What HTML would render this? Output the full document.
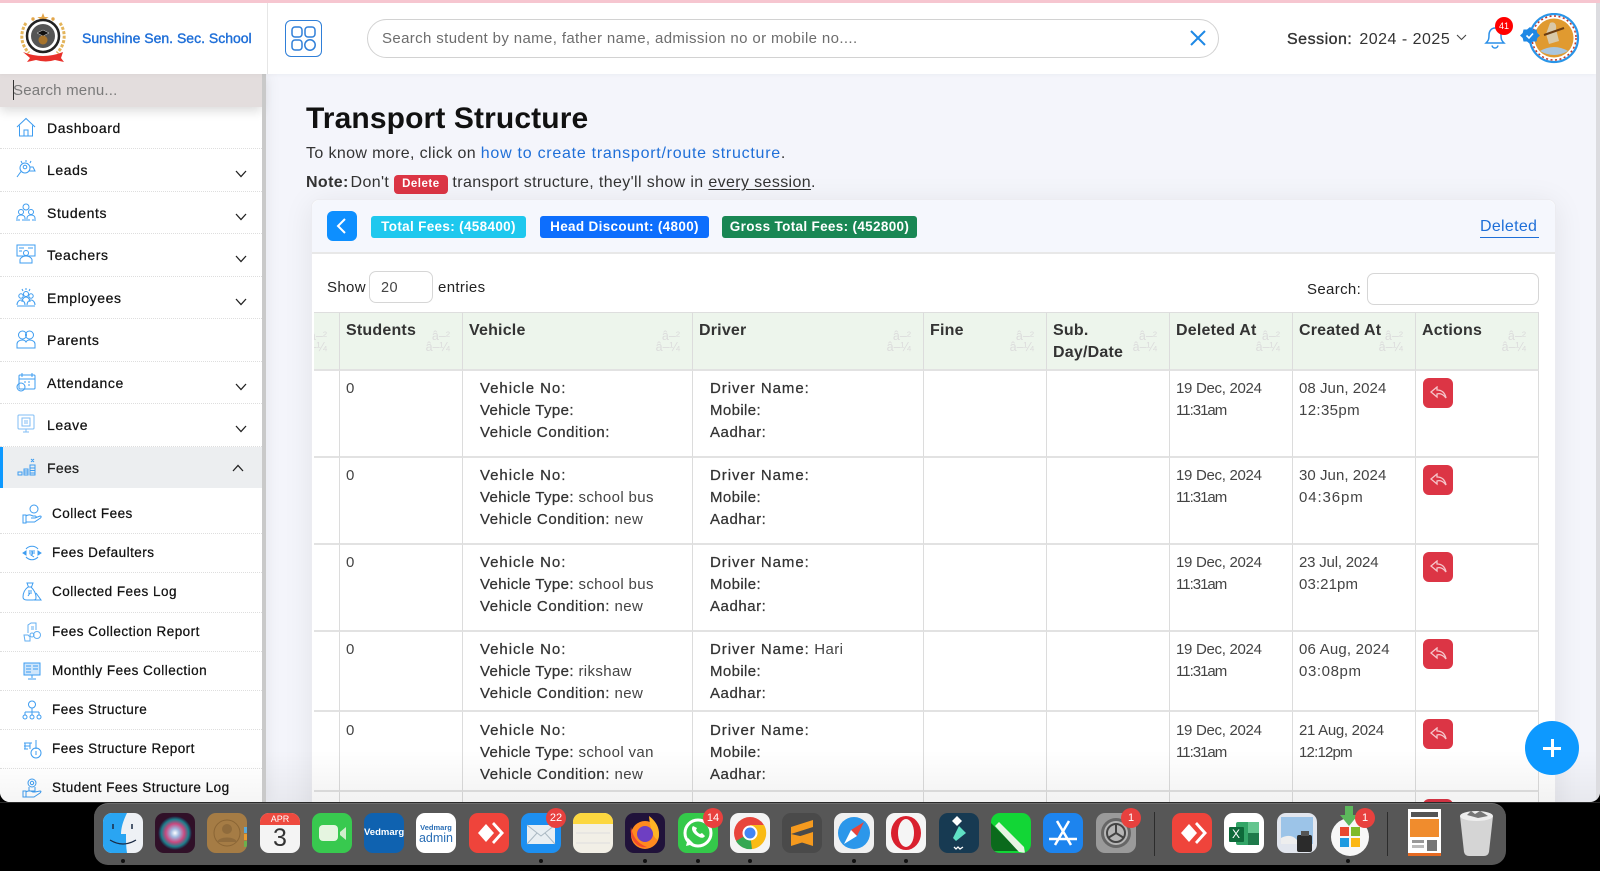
<!DOCTYPE html>
<html lang="en"><head><meta charset="utf-8"><title>Transport Structure</title>
<style>
*{box-sizing:border-box}
html,body{margin:0;padding:0;width:1600px;height:871px;overflow:hidden;background:#000}
body{font-family:"Liberation Sans",sans-serif;color:#333;position:relative}
a{text-decoration:none}
#win{position:absolute;left:0;top:0;width:1600px;height:802px;overflow:hidden;background:#f4f5fb;border-radius:0 0 10px 10px}
#pink{position:absolute;left:0;top:0;width:1600px;height:3px;background:#f6c6d0;z-index:9}
#hdr{position:absolute;left:0;top:3px;width:1596px;height:71px;background:#fff;z-index:5;box-shadow:0 1px 4px rgba(0,0,0,.04)}
#vl{position:absolute;left:267px;top:0;width:1px;height:71px;background:#e6e6e6}
#school{position:absolute;left:82px;top:26px;font-size:14px;line-height:18px;font-weight:400;color:#1f6fd8;letter-spacing:0;-webkit-text-stroke:.4px #1f6fd8;white-space:nowrap}
#grid{position:absolute;left:285px;top:17px;width:37px;height:37px;border:1px solid #2f7fd8;border-radius:6px}
#srch{position:absolute;left:367px;top:16px;width:852px;height:39px;border:1px solid #d2d2d2;border-radius:20px;font-size:15px;line-height:38px;padding-left:14px;color:#6d6d6d;letter-spacing:.37px}
#sess{position:absolute;left:1287px;top:27px;font-size:16px;line-height:20px;color:#333;white-space:nowrap;letter-spacing:.5px}
#sess b{font-weight:400;-webkit-text-stroke:.35px #333;margin-right:2px}
.abs{position:absolute}
#notif{position:absolute;left:1495px;top:14px;width:18px;height:18px;border-radius:50%;background:#f00;color:#fff;font-size:9px;line-height:18px;text-align:center}
#side{position:absolute;left:0;top:74px;width:262px;height:728px;background:#fff;z-index:3;box-shadow:6px 0 14px rgba(0,0,0,.06)}
#sbar{position:absolute;left:262px;top:74px;width:4px;height:728px;background:#c9c9c9;z-index:4}
#ss{height:33px;background:#e3dddd;font-size:15px;line-height:33px;padding-left:13px;color:#7a7a7a;letter-spacing:.2px;box-shadow:0 4px 10px rgba(0,0,0,.14);position:relative;z-index:2}
#ss i{position:absolute;left:13px;top:6px;width:1px;height:20px;background:#333}
.m{position:relative;height:42.45px;border-bottom:1px dotted #dedede;font-size:14px;line-height:42px;padding-left:47px;color:#111;letter-spacing:.6px;-webkit-text-stroke:.25px #111;white-space:nowrap}
.m svg.ic{position:absolute;left:16px;top:10px;width:20px;height:20px;fill:none;stroke:#3d9cf0;stroke-width:1;-webkit-text-stroke:0}
.m svg.ch{position:absolute;left:235px;top:21px;width:12px;height:8px;fill:none;stroke:#222;stroke-width:1.3}
.m.on{background:#eceef0;height:41px;border-bottom:0;border-left:3px solid #0d99ff;padding-left:44px;color:#222;letter-spacing:.3px}
.m.on svg.ic{left:14px}
.m.on svg.ch{left:229px;top:17px}
.s{position:relative;height:39.2px;border-bottom:1px dotted #dedede;font-size:13.5px;line-height:38px;padding-left:52px;color:#111;letter-spacing:.48px;-webkit-text-stroke:.25px #111;white-space:nowrap}
.s svg{position:absolute;left:22px;top:9px;width:20px;height:20px;fill:none;stroke:#3d9cf0;stroke-width:1;-webkit-text-stroke:0}
h1{position:absolute;left:306px;top:100px;margin:0;font-size:30px;line-height:38px;font-weight:700;color:#111;letter-spacing:.12px;white-space:nowrap}
.ln{position:absolute;left:306px;font-size:16px;line-height:22px;color:#333;letter-spacing:.37px;white-space:nowrap}
.ln a{color:#1f6fd8;letter-spacing:.74px}
.ln u{text-underline-offset:2px}
.ln b{margin-right:-3px}
.dl{display:inline-block;background:#dc3545;color:#fff;font-size:11.5px;font-weight:700;line-height:19px;height:19px;padding:0 8px;border-radius:4px;vertical-align:0;letter-spacing:.5px;margin:0}
#card{position:absolute;left:311px;top:199px;width:1245px;height:640px;background:#fff;border:1px solid #ececf1;border-radius:8px 8px 0 0;box-shadow:0 4px 30px rgba(0,0,0,.08)}
#chd{position:absolute;left:0;top:0;width:1243px;height:54px;background:#f5f7fd;border-bottom:2px solid #e8e8e8;border-radius:8px 8px 0 0}
#back{position:absolute;left:15px;top:11px;width:30px;height:30px;background:#0d8fff;border-radius:6px}
.bd{position:absolute;top:16px;height:22px;border-radius:3px;color:#fff;font-size:13.5px;font-weight:700;line-height:22px;text-align:center;white-space:nowrap;letter-spacing:.33px}
#del{position:absolute;left:1168px;top:16px;width:59px;font-size:16px;line-height:21px;color:#1f6fd8;border-bottom:1px solid #1f6fd8;letter-spacing:.3px;white-space:nowrap}
.tx{position:absolute;font-size:15px;line-height:20px;color:#222;white-space:nowrap;letter-spacing:.35px}
.inp{position:absolute;background:#fff;border:1px solid #d6d6d6;border-radius:7px}
#tw{position:absolute;left:314px;top:312px;width:1225px;height:490px;overflow:hidden}
table{border-collapse:separate;border-spacing:0;table-layout:fixed;width:1322px;margin-left:-97px}
th{position:relative;background:#edf5ec;height:59px;vertical-align:top;text-align:left;padding:7px 6px 0;font-size:16px;line-height:21.5px;font-weight:700;color:#333;border-top:1px solid #dedede;border-right:1.6px solid #dcdcdc;border-bottom:2px solid #e2e2e2;letter-spacing:.2px}
th span{position:absolute;right:12px;top:18px;font-size:12.5px;line-height:11px;font-weight:400;color:#dcdcdc;text-align:right;letter-spacing:0}
td{vertical-align:top;padding:7px 6px 0;font-size:15px;line-height:22px;color:#444;border-right:1.6px solid #dcdcdc;border-bottom:2px solid #e2e2e2;letter-spacing:.37px;white-space:nowrap}
td:last-child{padding-left:7px}
td.d{padding-left:17px}
td em{font-style:normal;color:#333;letter-spacing:.55px;-webkit-text-stroke:.25px #333}
td.d em:nth-of-type(1){letter-spacing:.95px}
td.d em:nth-of-type(2){letter-spacing:.38px}
td.dt{letter-spacing:-.3px}
td.dt i{font-style:normal;letter-spacing:-1px}
td.ct{letter-spacing:.05px}
td.ct i{font-style:normal;letter-spacing:.37px}
.r{display:block;width:30px;height:30px;background:#dc3545;border-radius:6px;margin-top:0;position:relative}
.r svg{position:absolute;left:7px;top:8px;width:17px;height:13px;fill:none;stroke:#f5c6cb;stroke-width:1.3}
#fade{position:absolute;left:266px;top:750px;width:1334px;height:52px;background:linear-gradient(rgba(0,0,0,0),rgba(0,0,0,.05));z-index:6;pointer-events:none}
#sf{position:absolute;left:0;top:760px;width:262px;height:42px;background:linear-gradient(rgba(0,0,0,0),rgba(0,0,0,.04));z-index:6}
#fab{position:absolute;left:1525px;top:721px;width:54px;height:54px;border-radius:50%;background:#0d99ff;z-index:7}
#fab:before{content:"";position:absolute;left:18px;top:25.5px;width:18px;height:3px;background:#fff}
#fab:after{content:"";position:absolute;left:25.5px;top:18px;width:3px;height:18px;background:#fff}
#scr{position:absolute;left:1596px;top:3px;width:4px;height:799px;background:#dcdce0;z-index:6}
#dock{position:absolute;left:94px;top:803px;width:1412px;height:62px;background:#575757;border-radius:14px;border-top:1px solid #6d6d6d;z-index:8}
#dockline{position:absolute;left:0;top:802px;width:1600px;height:1px;background:#2a2a2a;z-index:8}
.di{position:absolute;top:813px;width:40px;height:40px;z-index:9;border-radius:9px;overflow:hidden;font-family:"Liberation Sans",sans-serif}
.di svg{display:block;width:40px;height:40px}
.b{position:absolute;top:808px;width:20px;height:20px;border-radius:50%;background:#e8413e;color:#fff;font-size:11px;line-height:20px;text-align:center;z-index:10}
.dot{position:absolute;top:859px;width:4px;height:4px;border-radius:50%;background:#111;z-index:10}
.sep{position:absolute;top:812px;width:1px;height:44px;background:#2c2c2c;z-index:9}
</style></head><body>
<div id="win">
<div id="pink"></div>
<div id="hdr">
 <svg class="abs" style="left:17px;top:9px" width="52" height="54" viewBox="0 0 52 54" fill="none">
  <path d="M26 1l1.6 4h4l-3.2 2.4 1.2 4-3.6-2.4-3.6 2.4 1.2-4L20.400 5h4z" fill="#e3a64a"/>
  <circle cx="16" cy="7" r="1.700" fill="#e3a64a"/><circle cx="36" cy="7" r="1.700" fill="#e3a64a"/>
  <path d="M9 11C3 20 3 32 12 41" stroke="#e3b45a" stroke-width="3" stroke-dasharray="3 1.500"/>
  <path d="M43 11C49 20 49 32 40 41" stroke="#e3b45a" stroke-width="3" stroke-dasharray="3 1.500"/>
  <circle cx="26" cy="24" r="16" fill="#fff" stroke="#222" stroke-width="2.500"/>
  <circle cx="26" cy="24" r="12" fill="#555"/>
  <path d="M20 21l6-3 6 3-6 3z" fill="#111" stroke="#ddd" stroke-width=".5"/><circle cx="26" cy="28" r="4.500" fill="#a8742c"/>
  <path d="M6 40q20 8 40 0l-2 6 3 4-9-2q-9 3-19 0l-9 2 3-4z" fill="#e8302a"/>
 </svg>
 <div id="school">Sunshine Sen. Sec. School</div>
 <div id="vl"></div>
 <div id="grid"><svg width="35" height="35" viewBox="0 0 35 35" fill="none" stroke="#2f7fd8" stroke-width="1.500"><rect x="6" y="6" width="10" height="10" rx="3"/><rect x="19" y="6" width="10" height="10" rx="3"/><rect x="6" y="19" width="10" height="10" rx="3"/><circle cx="24" cy="24" r="5.200"/></svg></div>
 <div id="srch">Search student by name, father name, admission no or mobile no....</div>
 <svg class="abs" style="left:1189px;top:26px" width="18" height="18" viewBox="0 0 18 18" stroke="#1e88e5" stroke-width="2" fill="none"><path d="M2 2l14 14M16 2L2 16"/></svg>
 <div id="sess"><b>Session:</b> 2024 - 2025</div>
 <svg class="abs" style="left:1456px;top:31px" width="11" height="7" viewBox="0 0 11 7" fill="none" stroke="#444" stroke-width="1.100"><path d="M1 1l4.500 4.500L10 1"/></svg>
 <svg class="abs" style="left:1484px;top:21px" width="22" height="26" viewBox="0 0 22 26" fill="none" stroke="#2a8fe8" stroke-width="1.500"><path d="M2 19c2-2 3-3 3-8 0-4 2.500-7 6-7s6 3 6 7c0 5 1 6 3 8z"/><path d="M8 21.500c.5 2 1.700 2.500 3 2.500s2.500-.5 3-2.500"/></svg>
 <div id="notif">41</div>
 <svg class="abs" style="left:1520px;top:10px" width="60" height="52" viewBox="0 0 60 52" fill="none">
  <circle cx="34" cy="25" r="24" fill="#fff" stroke="#2a95e8" stroke-width="2.200"/>
  <circle cx="34" cy="25" r="19.500" fill="#e09a30"/>
  <path d="M20 38q14-8 28 0q-14 8-28 0" fill="#a9c6df"/>
  <path d="M30 10c4-2 7 1 6 6l3 12-10 3-3-10z" fill="#d9c9a8"/>
  <path d="M24 22l20-7" stroke="#6b3d12" stroke-width="2"/>
  <circle cx="34" cy="25" r="22" stroke="#c0392b" stroke-width="1.500" stroke-dasharray="2 2.500"/>
  <path d="M10 14l3 2.500h3.500l.8 3.500 2.700 2.500-2.700 2.500-.8 3.500H13l-3 2.500-3-2.500H3.500l-.8-3.500L0 22.500 2.700 20l.8-3.500H7z" fill="#1e88e5"/>
  <path d="M6.500 22.500l2.500 2.500 4-4.500" stroke="#fff" stroke-width="1.600"/>
 </svg>
</div>
<div id="side">
 <div id="ss"><i></i>Search menu...</div>
 <div class="m"><svg class="ic" viewBox="0 0 20 20"><path d="M1 10L10 1.500 19 10M3.500 8.500V19h13V8.500M8 19v-6h4v6"/></svg>Dashboard</div>
 <div class="m"><svg class="ic" viewBox="0 0 20 20"><circle cx="9" cy="9" r="5"/><path d="M5 12.500L1 18M10 1v2M5 2l1 2M15 2l-1 2M13 12h6l-2-4h-3"/><circle cx="9" cy="8" r="1.800"/></svg>Leads<svg class="ch" viewBox="0 0 12 8"><path d="M1 1l5 5.500L11 1"/></svg></div>
 <div class="m"><svg class="ic" viewBox="0 0 20 20"><circle cx="10" cy="5" r="3"/><circle cx="5" cy="10" r="2.500"/><circle cx="15" cy="10" r="2.500"/><path d="M1 19v-3c0-2 2-3 4-3s4 1 4 3v3M11 19v-3c0-2 2-3 4-3s4 1 4 3v3M3 19v-2M17 19v-2M7 19v-2M13 19v-2"/></svg>Students<svg class="ch" viewBox="0 0 12 8"><path d="M1 1l5 5.500L11 1"/></svg></div>
 <div class="m"><svg class="ic" viewBox="0 0 20 20"><rect x="1" y="1" width="18" height="11"/><circle cx="10" cy="9" r="2.500"/><path d="M4 19v-3c0-2 3-4 6-4s6 2 6 4v3zM3 4h5M3 7h3M12 4h5"/></svg>Teachers<svg class="ch" viewBox="0 0 12 8"><path d="M1 1l5 5.500L11 1"/></svg></div>
 <div class="m"><svg class="ic" viewBox="0 0 20 20"><circle cx="10" cy="7" r="2.500"/><circle cx="5" cy="9" r="2.200"/><circle cx="15" cy="9" r="2.200"/><path d="M1 18c0-3 2-5 4-5s4 2 4 5M11 18c0-3 2-5 4-5s4 2 4 5M6 15c0-3 2-5 4-5s4 2 4 5M1 19h18M10 1v2M6 2l1 2M14 2l-1 2"/></svg>Employees<svg class="ch" viewBox="0 0 12 8"><path d="M1 1l5 5.500L11 1"/></svg></div>
 <div class="m"><svg class="ic" viewBox="0 0 20 20"><circle cx="6.500" cy="6" r="4"/><circle cx="13.500" cy="6" r="4"/><path d="M1 19v-4c0-2 2-4 5.500-4 2 0 3 1 3.500 2 .5-1 1.500-2 3.500-2 3.500 0 5.500 2 5.500 4v4z"/></svg>Parents</div>
 <div class="m"><svg class="ic" viewBox="0 0 20 20"><rect x="3" y="3" width="16" height="14" rx="1"/><path d="M3 7h16M6 1v4M16 1v4M8 10h2M12 10h2M12 13h2"/><circle cx="5" cy="15" r="4"/></svg>Attendance<svg class="ch" viewBox="0 0 12 8"><path d="M1 1l5 5.500L11 1"/></svg></div>
 <div class="m"><svg class="ic" viewBox="0 0 20 20" style="opacity:.65"><rect x="2" y="1" width="16" height="14" rx="1"/><rect x="6" y="4" width="8" height="8"/><path d="M7 18h6M10 15v3M8 7h4M8 9h4"/></svg>Leave<svg class="ch" viewBox="0 0 12 8"><path d="M1 1l5 5.500L11 1"/></svg></div>
 <div class="m on"><svg class="ic" viewBox="0 0 20 20"><path d="M1 18v-3h4v3zM7 18v-6h4v6zM13 18V8h5v10zM7 14h4M7 16h4M13 11h5M13 13.500h5M13 16h5M14 2l3 3M17 2l-3 3"/></svg>Fees<svg class="ch" viewBox="0 0 12 8"><path d="M1 7l5-5.500L11 7"/></svg></div>
 <div style="height:7.5px"></div>
 <div class="s"><svg viewBox="0 0 20 20"><circle cx="12" cy="5" r="4"/><path d="M1 11h3v8H1zM4 12c3-2 5-1 7 0h2c2 0 1 2 0 2H9M13 14l5-2c1.500 0 1.500 1 .5 2l-6 4H4"/></svg>Collect Fees</div>
 <div class="s"><svg viewBox="0 0 20 20"><path d="M4 6a8 8 0 0 1 12 0M16 14a8 8 0 0 1-12 0M7 8h6M7 10h6M9 8c2 0 2 4 0 4l3 2" /><path d="M1 10l3-2v4zM19 10l-3-2v4z" fill="#3d9cf0"/></svg>Fees Defaulters</div>
 <div class="s"><svg viewBox="0 0 20 20"><path d="M5 1h6l-1.500 4h-3zM6 5C2 8 1 12 1 15c0 2 1 3 4 3h6c3 0 3-1 3-3 0-3-2-7-5-10"/><path d="M14 11l5 7h-7M6 9h4M6 11h4M8 11l-2 3"/></svg>Collected Fees Log</div>
 <div class="s"><svg viewBox="0 0 20 20" style="opacity:.8"><path d="M6 11V3l3-2h5v7M2 13h4l2 2v4H3zM9 5h3M9 7h3"/><circle cx="15" cy="13" r="3.500"/><circle cx="10" cy="13" r="2"/></svg>Fees Collection Report</div>
 <div class="s"><svg viewBox="0 0 20 20"><rect x="2" y="2" width="16" height="12" fill="#cfe6fb"/><path d="M10 14v3M6 18h8M4 5h5M4 8h5M4 11h5M11 5h5M11 8h5"/></svg>Monthly Fees Collection</div>
 <div class="s"><svg viewBox="0 0 20 20"><circle cx="10" cy="4.500" r="3.500"/><path d="M10 8v4M3 12h14M3 12v3M10 12v3M17 12v3"/><circle cx="3" cy="17" r="2"/><circle cx="10" cy="17" r="2"/><circle cx="17" cy="17" r="2"/></svg>Fees Structure</div>
 <div class="s"><svg viewBox="0 0 20 20"><path d="M2 4h8M2 7h6M2 10h4M3 4v6M8 4v6M14 1v9"/><circle cx="14" cy="14" r="5"/><path d="M14 12v4"/></svg>Fees Structure Report</div>
 <div class="s" style="border:0"><svg viewBox="0 0 20 20"><circle cx="10" cy="5" r="4"/><circle cx="10" cy="5" r="1.700"/><path d="M7 9v4h6V9M1 13h3v6H1zM4 14c3-2 5-1 7 0h2M13 14l5-1c1.500 0 1 1 0 2l-6 4H4"/></svg>Student Fees Structure Log</div>
</div>
<div id="sbar"></div>
<h1>Transport Structure</h1>
<div class="ln" style="top:143px">To know more, click on <a href="#">how to create transport/route structure</a>.</div>
<div class="ln" style="top:172px"><b>Note:</b> Don't <span class="dl">Delete</span> transport structure, they'll show in <u>every session</u>.</div>
<div id="card">
 <div id="chd">
  <div id="back"><svg width="30" height="30" viewBox="0 0 30 30" fill="none" stroke="#fff" stroke-width="2"><path d="M18 8l-7 7 7 7"/></svg></div>
  <div class="bd" style="left:59px;width:155px;background:#1ec8ee">Total Fees: (458400)</div>
  <div class="bd" style="left:228px;width:169px;background:#0d6efd">Head Discount: (4800)</div>
  <div class="bd" style="left:410px;width:195px;background:#198754">Gross Total Fees: (452800)</div>
  <div id="del">Deleted</div>
 </div>
</div>
<div class="tx" style="left:327px;top:278px">Show</div>
<div class="inp" style="left:369px;top:271px;width:64px;height:32px;font-size:14.500px;line-height:32px;padding-left:11px;color:#444;letter-spacing:.4px">20</div>
<div class="tx" style="left:438px;top:278px">entries</div>
<div class="tx" style="left:1307px;top:280px">Search:</div>
<div class="inp" style="left:1367px;top:273px;width:172px;height:32px"></div>
<div id="tw"><table>
<colgroup><col style="width:123px"><col style="width:123px"><col style="width:230px"><col style="width:231px"><col style="width:123px"><col style="width:123px"><col style="width:123px"><col style="width:123px"><col style="width:123px"></colgroup>
<thead><tr>
<th><span>â–²<br>â–¼</span></th>
<th>Students<span>â–²<br>â–¼</span></th>
<th>Vehicle<span>â–²<br>â–¼</span></th>
<th>Driver<span>â–²<br>â–¼</span></th>
<th>Fine<span>â–²<br>â–¼</span></th>
<th>Sub. Day/Date<span>â–²<br>â–¼</span></th>
<th>Deleted At<span>â–²<br>â–¼</span></th>
<th>Created At<span>â–²<br>â–¼</span></th>
<th>Actions<span>â–²<br>â–¼</span></th>
</tr></thead>
<tbody>
<tr style="height:87px"><td></td><td>0</td><td class="d"><em>Vehicle No:</em><br><em>Vehicle Type:</em><br><em>Vehicle Condition:</em></td><td class="d"><em>Driver Name:</em><br><em>Mobile:</em><br><em>Aadhar:</em></td><td></td><td></td><td class="dt">19 Dec, 2024<br><i>11:31am</i></td><td class="ct">08 Jun, 2024<br><i>12:35pm</i></td><td><a class="r" href="#"><svg viewBox="0 0 17 13"><path d="M7 1L1 6l6 5V8c3-1 6 0 9 4-1-5-4-8-9-8z"/></svg></a></td></tr>
<tr style="height:87px"><td></td><td>0</td><td class="d"><em>Vehicle No:</em><br><em>Vehicle Type:</em> school bus<br><em>Vehicle Condition:</em> new</td><td class="d"><em>Driver Name:</em><br><em>Mobile:</em><br><em>Aadhar:</em></td><td></td><td></td><td class="dt">19 Dec, 2024<br><i>11:31am</i></td><td class="ct">30 Jun, 2024<br><i style="letter-spacing:.9px">04:36pm</i></td><td><a class="r" href="#"><svg viewBox="0 0 17 13"><path d="M7 1L1 6l6 5V8c3-1 6 0 9 4-1-5-4-8-9-8z"/></svg></a></td></tr>
<tr style="height:87px"><td></td><td>0</td><td class="d"><em>Vehicle No:</em><br><em>Vehicle Type:</em> school bus<br><em>Vehicle Condition:</em> new</td><td class="d"><em>Driver Name:</em><br><em>Mobile:</em><br><em>Aadhar:</em></td><td></td><td></td><td class="dt">19 Dec, 2024<br><i>11:31am</i></td><td class="ct" style="letter-spacing:-.2px">23 Jul, 2024<br><i style="letter-spacing:.1px">03:21pm</i></td><td><a class="r" href="#"><svg viewBox="0 0 17 13"><path d="M7 1L1 6l6 5V8c3-1 6 0 9 4-1-5-4-8-9-8z"/></svg></a></td></tr>
<tr style="height:80px"><td></td><td>0</td><td class="d"><em>Vehicle No:</em><br><em>Vehicle Type:</em> rikshaw<br><em>Vehicle Condition:</em> new</td><td class="d"><em>Driver Name:</em> Hari<br><em>Mobile:</em><br><em>Aadhar:</em></td><td></td><td></td><td class="dt">19 Dec, 2024<br><i>11:31am</i></td><td class="ct" style="letter-spacing:.2px">06 Aug, 2024<br><i style="letter-spacing:.6px">03:08pm</i></td><td><a class="r" href="#"><svg viewBox="0 0 17 13"><path d="M7 1L1 6l6 5V8c3-1 6 0 9 4-1-5-4-8-9-8z"/></svg></a></td></tr>
<tr style="height:80px"><td style="padding-top:8px"></td><td style="padding-top:8px">0</td><td class="d" style="padding-top:8px"><em>Vehicle No:</em><br><em>Vehicle Type:</em> school van<br><em>Vehicle Condition:</em> new</td><td class="d" style="padding-top:8px"><em>Driver Name:</em><br><em>Mobile:</em><br><em>Aadhar:</em></td><td></td><td></td><td class="dt" style="padding-top:8px">19 Dec, 2024<br><i>11:31am</i></td><td class="ct" style="padding-top:8px;letter-spacing:-.3px">21 Aug, 2024<br><i style="letter-spacing:-.8px">12:12pm</i></td><td style="padding-top:7px"><a class="r" href="#"><svg viewBox="0 0 17 13"><path d="M7 1L1 6l6 5V8c3-1 6 0 9 4-1-5-4-8-9-8z"/></svg></a></td></tr>
<tr style="height:80px"><td></td><td></td><td></td><td></td><td></td><td></td><td></td><td></td><td><a class="r" href="#"></a></td></tr>
</tbody></table></div>
<div id="fade"></div><div id="sf"></div>
<div id="fab"></div>
<div id="scr"></div>
</div>
<div id="dockline"></div>
<div id="dock"></div>

<div class="di" style="left:103px"><svg viewBox="0 0 40 40"><rect width="40" height="40" fill="#eef1f5"/><path d="M0 0h24c-4 8-6 15-6 21h5c0 7 0 13 1 19H0z" fill="#2aa5f2"/><path d="M10 11v5M29 11v5" stroke="#1a2a44" stroke-width="1.500"/><path d="M7 27q13 8 26 0" stroke="#1a2a44" stroke-width="1.200" fill="none"/></svg></div>
<div class="di" style="left:155px"><svg viewBox="0 0 40 40"><defs><radialGradient id="si"><stop offset="0" stop-color="#fff"/><stop offset=".25" stop-color="#9fb8e0"/><stop offset=".55" stop-color="#c9487e"/><stop offset=".8" stop-color="#1d7f8c"/><stop offset="1" stop-color="#2b0d2b"/></radialGradient></defs><rect width="40" height="40" fill="#301028"/><circle cx="20" cy="20" r="17" fill="url(#si)"/></svg></div>
<div class="di" style="left:207px"><svg viewBox="0 0 40 40"><rect width="40" height="40" fill="#a57c45"/><circle cx="20" cy="20" r="13" fill="none" stroke="#8a6535"/><circle cx="20" cy="16" r="5" fill="#8f6b3c"/><path d="M10 29c2-6 18-6 20 0z" fill="#8f6b3c"/><rect x="37" y="14" width="3" height="6" fill="#5aa9d8"/><rect x="37" y="21" width="3" height="6" fill="#e89b2f"/><rect x="37" y="28" width="3" height="6" fill="#6cb04c"/></svg></div>
<div class="di" style="left:260px;background:#f4f4f4"><div style="height:12px;background:#ee4a3f;color:#fff;font-size:9px;line-height:13px;text-align:center">APR</div><div style="font-size:25px;line-height:27px;text-align:center;color:#333">3</div></div>
<div class="di" style="left:312px"><svg viewBox="0 0 40 40"><rect width="40" height="40" fill="#38c94f"/><rect x="7" y="12" width="19" height="16" rx="4" fill="#e5f5e0"/><path d="M28 19l6-5v13l-6-5z" fill="#cfeecb"/></svg></div>
<div class="di" style="left:364px;background:#0f62b0;color:#fff;font-size:9.500px;line-height:40px;text-align:center;font-weight:700">Vedmarg</div>
<div class="di" style="left:416px;background:#fff;color:#2a6eb5;text-align:center"><div style="font-size:7.500px;font-weight:700;line-height:9px;padding-top:10px">Vedmarg</div><div style="font-size:12.500px;line-height:13px">admin</div></div>
<div class="di" style="left:469px"><svg viewBox="0 0 40 40"><rect width="40" height="40" fill="#ef443b"/><path d="M17 11l8 9-8 9-8-9z" fill="#fff"/><path d="M25 9l10 11-10 11-2-2 8-9-8-9z" fill="#fff"/></svg></div>
<div class="di" style="left:521px"><svg viewBox="0 0 40 40"><rect width="40" height="40" fill="#1d8ff0"/><rect x="6" y="12" width="28" height="19" fill="#e8eef2"/><path d="M6 12l14 11 14-11M6 31l10-11M34 31L24 20" stroke="#aab8c2" fill="none"/></svg></div>
<div class="di" style="left:573px"><svg viewBox="0 0 40 40"><rect width="40" height="40" fill="#f2efe6"/><rect width="40" height="11" fill="#fcd73f"/><path d="M3 20h34M3 30h34" stroke="#ddd"/></svg></div>
<div class="di" style="left:625px"><svg viewBox="0 0 40 40"><rect width="40" height="40" fill="#20123a"/><circle cx="20" cy="22" r="14" fill="#ff8a1f"/><path d="M24 3c8 6 12 14 9 24-5-2-8-12-9-24z" fill="#ffb425"/><path d="M6 14c2 10 6 16 16 20-8 2-18-6-16-20z" fill="#f24c2c"/><circle cx="20" cy="21" r="8" fill="#6e3fc2"/></svg></div>
<div class="di" style="left:678px"><svg viewBox="0 0 40 40"><rect width="40" height="40" fill="#34c94a"/><circle cx="20" cy="20" r="13" fill="none" stroke="#fff" stroke-width="3"/><path d="M8 33l2-8 6 6z" fill="#fff"/><path d="M15 13c-2 2-1 6 3 9s7 4 9 1l-3-3-2 1c-2-1-3-2-4-4l1-2z" fill="#fff"/></svg></div>
<div class="di" style="left:730px;background:#f4f4f4"><svg viewBox="0 0 40 40"><circle cx="20" cy="20" r="16" fill="#e8453c"/><path d="M20 20L6 28a16 16 0 0 0 16 8z" fill="#35a853"/><path d="M20 20l2 16a16 16 0 0 0 12-24H20z" fill="#f9bb15"/><circle cx="20" cy="20" r="7.500" fill="#fff"/><circle cx="20" cy="20" r="5.500" fill="#4285f4"/></svg></div>
<div class="di" style="left:782px"><svg viewBox="0 0 40 40"><rect width="40" height="40" fill="#4a4a4a"/><path d="M9 14l22-7v7L9 21zM9 21l22 5v7L9 26zM9 26l22-7v7L9 33z" fill="#f59a1e"/></svg></div>
<div class="di" style="left:834px;background:#f0f0f0"><svg viewBox="0 0 40 40"><circle cx="20" cy="20" r="16" fill="#2c97ea"/><path d="M30 9L17 17l6 6z" fill="#e8433a"/><path d="M10 31l7-14 6 6z" fill="#fff"/></svg></div>
<div class="di" style="left:886px;background:#f5f5f5"><svg viewBox="0 0 40 40"><ellipse cx="20" cy="20" rx="15" ry="17" fill="#d9202e"/><ellipse cx="20" cy="20" rx="8" ry="14" fill="#f5f5f5"/></svg></div>
<div class="di" style="left:939px"><svg viewBox="0 0 40 40"><rect width="40" height="40" fill="#173a52"/><path d="M18 3l5 5-5 5-5-5z" fill="#fff"/><path d="M20 13l7 7-10 8-3-3z" fill="#5fe0c4"/><path d="M15 34l2 2 2-2 2 2 3-2" stroke="#fff" fill="none" stroke-width="1.300"/></svg></div>
<div class="di" style="left:991px"><svg viewBox="0 0 40 40"><rect width="40" height="40" fill="#12d636"/><path d="M0 10l20 20 12 8H0z" fill="#0b6a1c"/><path d="M8 9L4 13l24 26 6 1-1-6z" fill="#e6f4e3"/></svg></div>
<div class="di" style="left:1043px"><svg viewBox="0 0 40 40"><rect width="40" height="40" fill="#1d84ee"/><path d="M14 8l14 24M26 8L12 32M6 26h28" stroke="#fff" stroke-width="2.500" fill="none"/></svg></div>
<div class="di" style="left:1096px"><svg viewBox="0 0 40 40"><rect width="40" height="40" fill="#9a9a9a"/><circle cx="20" cy="20" r="15" fill="#666"/><circle cx="20" cy="20" r="12" fill="#b5b5b5"/><circle cx="20" cy="20" r="9" fill="none" stroke="#444" stroke-width="2"/><path d="M20 20V11M20 20l8 5M20 20l-8 5" stroke="#444" stroke-width="2"/></svg></div>
<div class="sep" style="left:1154px"></div>
<div class="di" style="left:1172px"><svg viewBox="0 0 40 40"><rect width="40" height="40" fill="#ef443b"/><path d="M17 11l8 9-8 9-8-9z" fill="#fff"/><path d="M25 9l10 11-10 11-2-2 8-9-8-9z" fill="#fff"/></svg></div>
<div class="di" style="left:1224px;background:#fff"><svg viewBox="0 0 40 40"><rect x="12" y="9" width="23" height="23" rx="2" fill="#33a567"/><rect x="24" y="9" width="11" height="11" fill="#64c58f"/><rect x="24" y="20" width="11" height="12" fill="#1f7a4b"/><rect x="5" y="14" width="15" height="15" rx="1" fill="#0e6a3a"/></svg><span style="position:absolute;left:8px;top:14px;font-size:12px;line-height:15px;color:#fff">X</span></div>
<div class="di" style="left:1277px"><svg viewBox="0 0 40 40"><rect width="40" height="40" fill="#e2e6ee"/><rect x="4" y="4" width="32" height="27" fill="#9cc4e8"/><path d="M4 25q10-5 16 2v4H4z" fill="#eee"/><rect x="20" y="22" width="15" height="17" rx="2" fill="#2b2b2b"/><rect x="24" y="18" width="8" height="5" fill="#555"/></svg></div>
<div class="di" style="left:1330px;top:806px;height:50px;overflow:visible"><svg viewBox="0 0 40 50" style="height:50px"><circle cx="20" cy="31" r="19" fill="#f7f7f7"/><path d="M15 0h8v9h5L19 20 10 9h5z" fill="#5cb85c"/><rect x="10" y="21" width="9" height="9" fill="#e8482f"/><rect x="21" y="21" width="9" height="9" fill="#7fba2a"/><rect x="10" y="32" width="9" height="9" fill="#1f9be0"/><rect x="21" y="32" width="9" height="9" fill="#fbb714"/></svg></div>
<div class="sep" style="left:1387px"></div>
<div class="di" style="left:1408px;top:809px;width:33px;height:47px;border-radius:0"><svg viewBox="0 0 33 47" style="width:33px;height:47px"><rect width="33" height="47" fill="#fff"/><rect x="3" y="3" width="27" height="5" fill="#555"/><rect x="2" y="10" width="29" height="18" fill="#f08c2d"/><rect x="4" y="31" width="12" height="3" fill="#999"/><rect x="4" y="36" width="12" height="3" fill="#bbb"/><rect x="19" y="31" width="10" height="11" fill="#777"/><rect y="44" width="33" height="3" fill="#e66a22"/></svg></div>
<div class="di" style="left:1459px;top:809px;width:35px;height:47px;border-radius:0"><svg viewBox="0 0 35 47" style="width:35px;height:47px"><path d="M1 7h33l-4 36q-1 4-5 4H10q-4 0-5-4z" fill="#d5d5d5"/><ellipse cx="17.500" cy="7" rx="16.500" ry="5" fill="#eee"/><path d="M8 6l4-4 4 3 5-3 5 3 3 2-10 2z" fill="#777"/></svg></div>

<div class="b" style="left:546px">22</div>
<div class="b" style="left:703px">14</div>
<div class="b" style="left:1121px">1</div>
<div class="b" style="left:1355px">1</div>
<div class="dot" style="left:121px"></div>
<div class="dot" style="left:539px"></div>
<div class="dot" style="left:643px"></div>
<div class="dot" style="left:696px"></div>
<div class="dot" style="left:748px"></div>
<div class="dot" style="left:852px"></div>
<div class="dot" style="left:904px"></div>
<div class="dot" style="left:1346px"></div>
</body></html>
